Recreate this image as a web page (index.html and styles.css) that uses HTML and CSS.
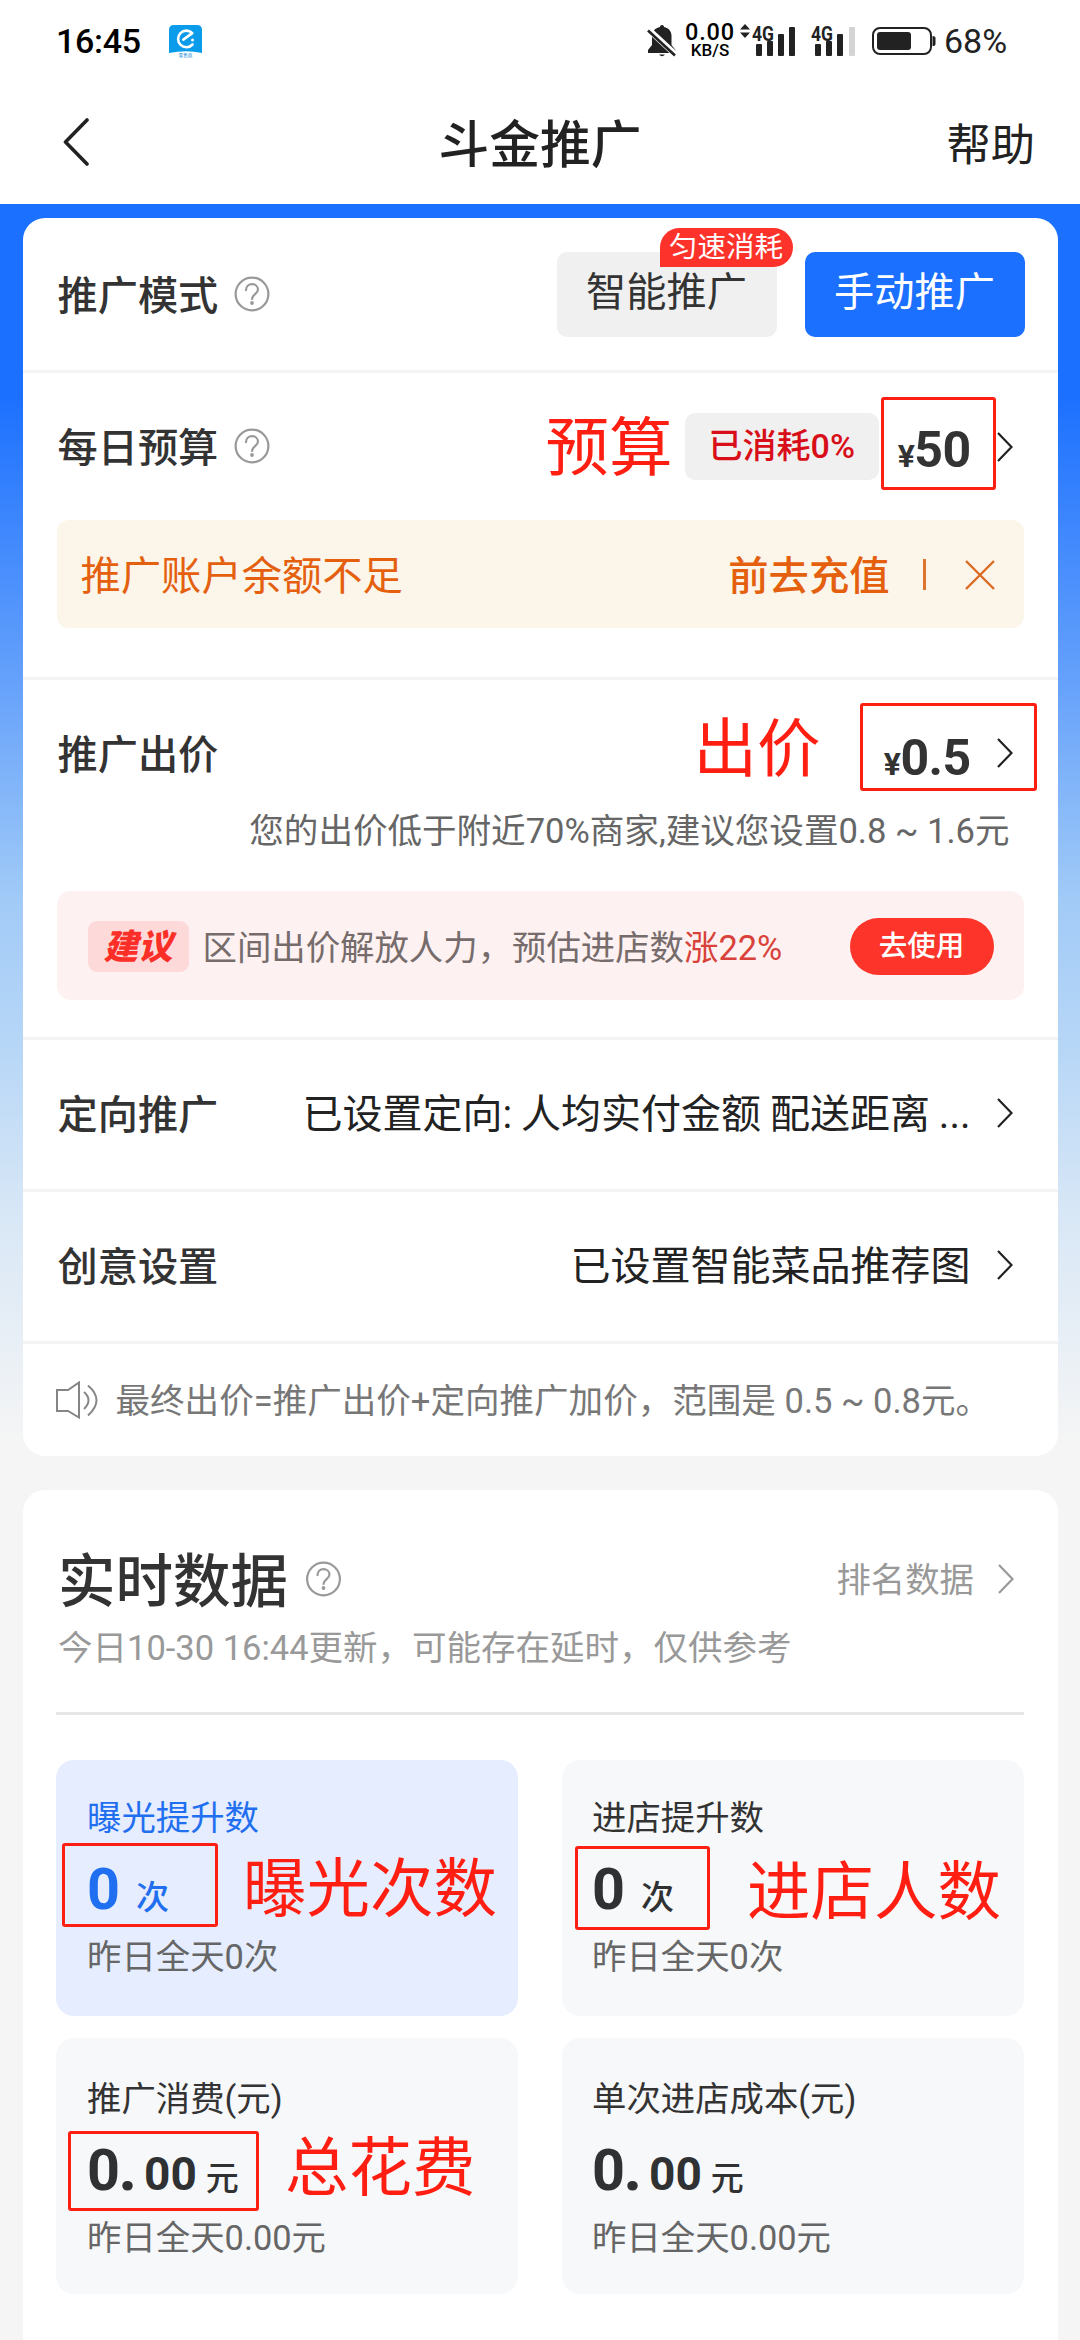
FILE: index.html
```html
<!DOCTYPE html>
<html lang="zh-CN">
<head>
<meta charset="utf-8">
<title>斗金推广</title>
<link rel="stylesheet" href="styles.css">
</head>
<body>
<svg class="defs" aria-hidden="true">
  <symbol id="i-help" viewBox="0 0 36 36"><g fill="none" stroke="#999" stroke-width="2.2" stroke-linecap="round"><circle cx="18" cy="18" r="16.4"/><path d="M12 14.2c0-3.6 2.7-6 6-6s6 2.3 6 5.4c0 4.300-6 4.700-6 9.400"/></g><circle cx="18" cy="27" r="1.900" fill="#999"/></symbol>
  <symbol id="i-chev" viewBox="0 0 16 30"><path d="M1 1l13.500 14L1 29" fill="none" stroke="currentColor" stroke-width="2.200"/></symbol>
</svg>
<div class="screen">
  <div class="status">
    <span class="time">16:45</span>
    <svg class="app" viewBox="0 0 33 33"><path d="M0 28V5q0-5 5-5h23q5 0 5 5v23q-16-3.500-33 0z" fill="#0a9cea"/><path d="M23.500 19.500a8.300 8.300 0 1 1-.200-11.400l-9 6.500" fill="none" stroke="#fff" stroke-width="2.600" stroke-linecap="round" stroke-linejoin="round"/><circle cx="23.500" cy="15" r="1.500" fill="#fff"/><text x="16.500" y="32" font-size="4.600" text-anchor="middle" fill="#0a86d8">零售商</text></svg>
    <span class="grow"></span>
    <svg class="bell" viewBox="0 0 30 32"><path d="M15 0c1.500 0 2 1 2 2 5 1 7.500 4.500 7.500 9v9l4 5v3H1v-3l4-5v-9c0-4.500 3-8 8-9 0-1 .500-2 2-2zM12 29.500h6q-3 3.500-6 0z" fill="#222"/><path d="M2 5l27 25" stroke="#fff" stroke-width="6"/><path d="M1 5.500l27 25" stroke="#222" stroke-width="2.600"/></svg>
    <span class="speed"><b>0.00</b><i>KB/S</i></span>
    <svg class="updown" viewBox="0 0 10 14"><path d="M0 5.500L5 0l5 5.500zM0 8.500L5 14l5-5.500z" fill="#222"/></svg>
    <svg class="sig" viewBox="0 0 44 32"><text x="0" y="15.500" class="g4" textLength="22" lengthAdjust="spacingAndGlyphs">4G</text><g fill="#222"><rect x="4" y="19" width="6" height="12" rx="1"/><rect x="15" y="16" width="6" height="15" rx="1"/><rect x="26" y="9" width="6" height="22" rx="1"/><rect x="37" y="2" width="6" height="29" rx="1"/></g></svg>
    <svg class="sig sig2" viewBox="0 0 44 32"><text x="0" y="15.500" class="g4" textLength="22" lengthAdjust="spacingAndGlyphs">4G</text><g fill="#222"><rect x="4" y="19" width="6" height="12" rx="1"/><rect x="15" y="16" width="6" height="15" rx="1"/><rect x="26" y="9" width="6" height="22" rx="1"/><rect x="38" y="2" width="6" height="29" rx="1" fill="#d4d4d4"/></g></svg>
    <svg class="bat" viewBox="0 0 64 28"><rect x="1" y="1" width="58" height="26" rx="7" fill="none" stroke="#222" stroke-width="2"/><rect x="5" y="5" width="34" height="18" rx="3" fill="#222"/><path d="M60.500 9q3 0 3 2v6q0 2-3 2z" fill="#222"/></svg>
    <span class="pct">68%</span>
  </div>
  <header class="nav">
    <svg class="back" viewBox="0 0 26 48"><path d="M24 2L2.500 24 24 46" fill="none" stroke="#222" stroke-width="3.600" stroke-linecap="round" stroke-linejoin="round"/></svg>
    <h1>斗金推广</h1>
    <span class="helplink">帮助</span>
  </header>
  <main>
    <section class="card">
      <div class="row line first">
        <span class="label">推广模式</span><svg class="help"><use href="#i-help"/></svg>
        <div class="modes"><span class="mode">智能推广<em>匀速消耗</em></span><span class="mode on">手动推广</span></div>
      </div>
      <div class="block budget">
        <div class="row">
          <span class="label">每日预算</span><svg class="help"><use href="#i-help"/></svg>
          <span class="used">已消耗0%</span>
          <span class="money"><small>¥</small>50</span><svg class="chev"><use href="#i-chev"/></svg>
        </div>
        <div class="alert"><span>推广账户余额不足</span><b>前去充值</b><i class="bar"></i><svg class="close" viewBox="0 0 30 30"><path d="M1 1l28 28M29 1L1 29" stroke="#dd6a24" stroke-width="2.400"/></svg></div>
        <span class="note n-budget">预算</span><i class="frame f-budget"></i>
      </div>
      <div class="block bid">
        <div class="row">
          <span class="label">推广出价</span>
          <span class="money"><small>¥</small>0.5</span><svg class="chev"><use href="#i-chev"/></svg>
        </div>
        <p class="hint">您的出价低于附近70%商家,建议您设置0.8 ~ 1.6元</p>
        <div class="advice"><span class="tag">建议</span><span class="txt">区间出价解放人力，预估进店数<em>涨22%</em></span><span class="use">去使用</span></div>
        <span class="note n-bid">出价</span><i class="frame f-bid"></i>
      </div>
      <div class="row line target"><span class="label">定向推广</span><span class="value">已设置定向: 人均实付金额 配送距离 ...</span><svg class="chev"><use href="#i-chev"/></svg></div>
      <div class="row line target"><span class="label">创意设置</span><span class="value">已设置智能菜品推荐图</span><svg class="chev"><use href="#i-chev"/></svg></div>
      <div class="final"><svg class="spk" viewBox="0 0 43 38"><g fill="none" stroke="#858585" stroke-width="2"><path d="M1 9h11L23 1.500v35L12 30H1z"/><path d="M28 11q9 8 0 17M32 4.500q17 14.500 0 30"/></g></svg><span>最终出价=推广出价+定向推广加价，范围是 0.5 ~ 0.8元。</span></div>
    </section>
    <section class="card data">
      <div class="head"><h2>实时数据</h2><svg class="help"><use href="#i-help"/></svg><span class="rank">排名数据</span><svg class="chev gray"><use href="#i-chev"/></svg></div>
      <p class="upd">今日10-30 16:44更新，可能存在延时，仅供参考</p>
      <div class="tiles">
        <div class="tile on"><span class="k">曝光提升数</span><span class="v">0<small class="far">次</small></span><span class="y">昨日全天0次</span><span class="note n-exp">曝光次数</span><i class="frame f-exp"></i></div>
        <div class="tile"><span class="k">进店提升数</span><span class="v">0<small class="far">次</small></span><span class="y">昨日全天0次</span><span class="note n-vis">进店人数</span><i class="frame f-vis"></i></div>
        <div class="tile low"><span class="k">推广消费(元)</span><span class="v">0<b>.</b><s>00</s><small>元</small></span><span class="y">昨日全天0.00元</span><span class="note n-cost">总花费</span><i class="frame f-cost"></i></div>
        <div class="tile low"><span class="k">单次进店成本(元)</span><span class="v">0<b>.</b><s>00</s><small>元</small></span><span class="y">昨日全天0.00元</span></div>
      </div>
    </section>
  </main>
</div>
</body>
</html>
```

FILE: styles.css
```css
* { box-sizing: border-box; margin: 0; padding: 0; }
body {
  width: 1080px; height: 2340px; overflow: hidden;
  font-family: Roboto, "Noto Sans CJK SC", sans-serif;
  color: #333; background: #fff;
}
i, em { font-style: normal; }
svg { display: block; flex: none; }
span, h1, h2, p { white-space: nowrap; }
.defs { position: absolute; width: 0; height: 0; }
.screen { width: 1080px; height: 2340px; overflow: hidden; display: flex; flex-direction: column; }

/* status bar */
.status { height: 82px; padding: 0 75px 0 56px; display: flex; align-items: center; flex: none; color: #222; }
.grow { flex: 1; }
.time { font-size: 34px; font-weight: 500; color: #000; width: 113px; letter-spacing: -.3px; }
.app { width: 33px; height: 33px; }
.bell { width: 30px; height: 32px; margin-right: 8px; }
.speed { width: 50px; display: flex; flex-direction: column; align-items: center; color: #000; margin-right: 5px; }
.speed b { font-size: 23.500px; line-height: 18px; font-weight: 500; letter-spacing: .8px; }
.speed i { font-size: 17px; line-height: 17px; font-weight: 500; margin-top: 1px; }
.updown { width: 10px; height: 14px; margin: 0 2px 20px 0; }
.g4 { font: 700 21px Roboto, sans-serif; fill: #222; }
.sig { width: 44px; height: 32px; overflow: visible; }
.sig2 { margin-left: 15px; }
.bat { width: 64px; height: 28px; margin: 0 8px 0 17px; }
.pct { font-size: 34px; width: 61px; }

/* title bar */
.nav { height: 122px; padding: 0 46px 2px; display: grid; grid-template-columns: 1fr auto 1fr; align-items: center; flex: none; color: #222; }
.back { width: 26px; height: 48px; margin-left: 17px; }
h1 { font-size: 50.800px; font-weight: 500; margin-top: -2px; }
.helplink { font-size: 44.300px; justify-self: end; margin-right: -1px; }

main {
  flex: 1; min-height: 0; padding: 14px 22.500px 0;
  display: flex; flex-direction: column; gap: 34px;
  background: linear-gradient(#1c70ff 0, #1c70ff 190px, #66a2fb 480px, #a2cbf7 700px, #b8d7f7 850px, #d8e7f6 1010px, #f5f5f5 1240px);
}
.card { background: #fff; border-radius: 22px; flex: none; }

.row { height: 149px; padding: 0 33px 0 35px; display: flex; align-items: center; font-size: 40.200px; }
.line { height: 152px; border-bottom: 3px solid #f3f3f3; }
.first { height: 155px; }
.target { padding-bottom: 3px; }
.label { font-weight: 500; margin-top: -4px; }
.help { width: 36px; height: 36px; margin: -1px 0 0 16px; }
.modes { margin-left: auto; display: flex; gap: 28px; margin-top: 1px; }
.mode { position: relative; width: 220px; height: 85px; line-height: 81px; text-align: center; border-radius: 10px; background: #f0f0f0; }
.mode.on { background: #1b70ff; color: #fff; }
.mode em { position: absolute; left: 103px; top: -24px; width: 133px; height: 39px; line-height: 40px; font-size: 28.500px; color: #fff; background: #fd332b; border-radius: 20px 20px 20px 0; }
.chev { width: 16px; height: 30px; color: #222; margin: 0 12px 0 26px; }
.money { font-size: 50px; font-weight: 700; letter-spacing: -.6px; padding-top: 6px; }
.money small { font-size: 32px; }

.block { position: relative; border-bottom: 3px solid #f3f3f3; }
.budget { height: 307px; }
.budget .row { height: 147px; }
.used { margin-left: auto; margin-right: 19px; width: 194px; height: 67px; line-height: 66px; text-align: center; border-radius: 10px; background: #f0f0f0; color: #d80f18; font-weight: 500; font-size: 34px; }
.alert { margin: 0 34px; height: 108px; border-radius: 12px; background: #fbf6e9; color: #e4600f; font-size: 40.300px; display: flex; align-items: center; padding: 0 29px 4px 24px; }
.alert b { margin-left: auto; font-weight: 500; }
.bar { width: 3px; height: 31px; background: #df7430; margin: 4px 39px 0 33px; }
.close { width: 30px; height: 30px; margin-top: 5px; }

.bid { height: 360px; padding-top: 22px; }
.bid .row { height: 102px; }
.bid .money { margin-left: auto; padding-top: 10px; }
.hint { height: 54px; line-height: 54px; text-align: right; padding-right: 48px; font-size: 34.550px; color: #666; }
.advice { margin: 33px 34px 0; height: 109px; border-radius: 14px; background: #fdf1f1; display: flex; align-items: center; padding: 0 30px 0 31px; font-size: 34.400px; color: #766c6c; }
.tag { width: 101px; height: 51px; line-height: 53px; text-align: center; border-radius: 9px; background: #fdd9d9; color: #fb2f27; font-weight: 900; font-style: italic; font-size: 34.500px; margin: 1px 14px 0 0; }
.txt { margin-top: -2px; }
.txt em { color: #d8423a; }
.use { margin-left: auto; margin-top: 2px; width: 144px; height: 57px; line-height: 57px; border-radius: 29px; background: #fd3429; color: #fff; text-align: center; font-size: 28.500px; font-weight: 500; }
.value { margin-left: auto; color: #222; font-size: 40px; margin-top: -4px; word-spacing: -1px; }
.final { height: 112px; display: flex; align-items: center; padding-left: 33px; gap: 17px; font-size: 34.550px; color: #777; }
.final span { margin-top: -5px; }
.spk { width: 43px; height: 38px; }

.data { height: 900px; padding: 0 33.500px; }
.head { height: 134px; padding: 44px 0 0 2px; display: flex; align-items: center; }
.head .help { width: 37px; height: 36px; margin-left: 17px; }
h2 { font-size: 57.500px; font-weight: 500; margin-top: -5px; }
.rank { margin-left: auto; font-size: 34.400px; color: #999; margin-top: -4px; }
.head .chev { color: #999; margin: 0 10px 0 24px; }
.upd { height: 91px; line-height: 48px; padding-left: 2px; font-size: 34.500px; color: #999; border-bottom: 3px solid #e6e6e6; }
.tiles { padding-top: 45px; display: grid; grid-template-columns: 462px 462px; justify-content: space-between; gap: 22px 0; }
.tile { position: relative; height: 256px; border-radius: 18px; background: #f7f8fa; padding: 32px 0 0 31px; display: flex; flex-direction: column; font-size: 34.400px; }
.tile:nth-child(even) { padding-left: 30px; }
.tile.on { background: #e5edfe; }
.tile.low { padding-top: 35px; }
.k { line-height: 53px; }
.v { height: 84px; line-height: 84px; font-size: 57.500px; font-weight: 700; color: #2f3133; display: flex; align-items: baseline; margin-top: 3px; }
.v b { width: 25px; margin-left: -1px; }
.v s { text-decoration: none; font-size: 46px; }
.v small { font-size: 33px; font-weight: 500; margin-left: 9px; }
.v small.far { margin-left: 16px; }
.y { line-height: 50px; color: #666; }
.on .k, .on .v { color: #1f6ff0; }

/* red callouts over the page */
.note { position: absolute; font-size: 63.500px; line-height: 64px; color: #ff1f12; }
.frame { position: absolute; border: 3px solid #ff1f12; border-radius: 3px; }
.n-budget { left: 523px; top: 44px; }
.f-budget { left: 858px; top: 24px; width: 115px; height: 93px; }
.n-bid { left: 671px; top: 38px; }
.f-bid { left: 837px; top: 23px; width: 177px; height: 88px; }
.n-exp { left: 187px; top: 98px; }
.f-exp { left: 6px; top: 83px; width: 156px; height: 84px; }
.n-vis { left: 185px; top: 101px; }
.f-vis { left: 13px; top: 86px; width: 135px; height: 84px; }
.n-cost { left: 229px; top: 99px; }
.f-cost { left: 12px; top: 93px; width: 191px; height: 80px; }
```
